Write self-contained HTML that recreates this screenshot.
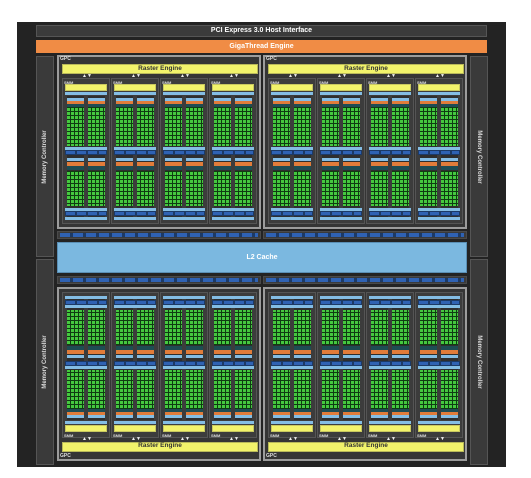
<!DOCTYPE html>
<html><head><meta charset="utf-8"><style>
*{margin:0;padding:0;box-sizing:border-box}
body{width:531px;height:478px;background:#fff;position:relative;overflow:hidden;font-family:"Liberation Sans",sans-serif}
.a{position:absolute}
#outer{left:17px;top:22px;width:489px;height:445px;background:#232323}
.bar{position:absolute;color:#fff;font-weight:bold;text-align:center}
.mc{position:absolute;width:18px;background:#3a3a3a;border:1px solid #555}
.mct{position:absolute;color:#ddd;font-size:6px;font-weight:bold;white-space:nowrap;width:100px;text-align:center;left:50%;top:50%;margin-left:-50px;margin-top:-4px;line-height:8px}
.gpc{position:absolute;width:204px;height:174px;background:#353535;border:2px solid #9c9c9c}
.ras{position:absolute;left:3px;top:7px;width:196px;height:10px;background:#f2f36b;border:1px solid #b9b95a}
.smm{position:absolute;top:21px;width:48px;height:146px;background:#3c3c3c;border:1px solid #555}
.s{position:absolute}
.yb{left:2px;top:5px;width:42px;height:7px;background:#f2f36b;border:1px solid #c8c860}
.lb{left:2px;width:42px;height:3px;background:#84bde4}
.db{left:2px;width:42px;height:5px;background:#1c3a66;background-image:repeating-linear-gradient(90deg,#2f62b3 0 9px,#1c3a66 9px 11px);border:1px solid #1c3a66}
.col{width:17px;top:17px;height:122px;background:#2e2e2e}
.c{position:absolute;left:0;width:17px}
.clb{background:#84bde4}
.cor{background:#e17c3a}
.cte{background:#1e4c54}
.cg{background-color:#0f3c12;background-image:linear-gradient(90deg,rgba(0,0,0,0) 0 3px,#0f3c12 3px 4px),linear-gradient(0deg,rgba(0,0,0,0) 0 3px,#0f3c12 3px 4px),linear-gradient(#45c83f,#45c83f);background-size:4px 4px,4px 4px,100% 100%}
.flip{transform:scaleY(-1)}
.lbl{position:absolute;color:#ddd;font-size:5px;font-weight:bold;line-height:5px}
.rt{position:absolute;width:196px;text-align:center;font-size:6.5px;font-weight:bold;color:#333;line-height:10px}
.arr{position:absolute;color:#eee;font-size:5px;line-height:5px;letter-spacing:0px}
.dash{position:absolute;height:8px;background:#3a3a3a;border:1px solid #4a4a4a}
.dash i{position:absolute;top:1px;bottom:1px;left:2px;right:2px;background-image:repeating-linear-gradient(90deg,#2f62b3 0 10px,#1c3a66 10px 13px)}
</style></head><body>
<div id="outer" class="a"></div>
<div class="bar" style="left:36px;top:25px;width:451px;height:12px;background:#3b3b3b;border:1px solid #555;font-size:7px;line-height:10px">PCI Express 3.0 Host Interface</div>
<div class="bar" style="left:36px;top:40px;width:451px;height:13px;background:#f08c45;font-size:7px;line-height:13px">GigaThread Engine</div>
<div class="mc" style="left:36px;top:56px;height:201px"><div class="mct" style="transform:rotate(-90deg)">Memory Controller</div></div>
<div class="mc" style="left:36px;top:259px;height:206px"><div class="mct" style="transform:rotate(-90deg)">Memory Controller</div></div>
<div class="mc" style="left:470px;top:56px;height:201px"><div class="mct" style="transform:rotate(90deg)">Memory Controller</div></div>
<div class="mc" style="left:470px;top:259px;height:206px"><div class="mct" style="transform:rotate(90deg)">Memory Controller</div></div>

<div class="dash" style="left:57px;top:231px;width:204px"><i></i></div>
<div class="dash" style="left:263px;top:231px;width:204px"><i></i></div>
<div class="a" style="left:57px;top:242px;width:410px;height:31px;background:#7bb8e0;border:1px solid #5a8fb5;color:#fff;font-size:7px;font-weight:bold;text-align:center;line-height:29px">L2 Cache</div>
<div class="dash" style="left:57px;top:276px;width:204px"><i></i></div>
<div class="dash" style="left:263px;top:276px;width:204px"><i></i></div>

<template id="t"></template>
<!-- GPC shapes -->
<div id="g1" class="gpc" style="left:57px;top:55px"></div>
<div id="g2" class="gpc" style="left:263px;top:55px"></div>
<div id="g3" class="gpc flip" style="left:57px;top:287px"></div>
<div id="g4" class="gpc flip" style="left:263px;top:287px"></div>

<!-- text labels -->
<div class="lbl" style="left:60px;top:57px">GPC</div>
<div class="lbl" style="left:266px;top:57px">GPC</div>
<div class="lbl" style="left:60px;top:454px">GPC</div>
<div class="lbl" style="left:266px;top:454px">GPC</div>
<div class="rt" style="left:62px;top:64px">Raster Engine</div>
<div class="rt" style="left:268px;top:64px">Raster Engine</div>
<div class="rt" style="left:62px;top:441px">Raster Engine</div>
<div class="rt" style="left:268px;top:441px">Raster Engine</div>

<div id="labels"></div>
<script>
function smmHTML(){
 var h='<div class="s yb"></div><div class="s lb" style="top:13px"></div>';
 [4,25].forEach(function(x){
  h+='<div class="s col" style="left:'+x+'px">'+
   '<div class="c clb" style="top:2px;height:3px"></div>'+
   '<div class="c cor" style="top:5px;height:3px"></div>'+
   '<div class="c cte" style="top:8px;height:3px"></div>'+
   '<div class="c cg" style="top:11px;height:39px"></div>'+
   '<div class="c clb" style="top:62px;height:3px"></div>'+
   '<div class="c cor" style="top:66px;height:4px"></div>'+
   '<div class="c cte" style="top:70px;height:4px"></div>'+
   '<div class="c cg" style="top:75px;height:35px"></div>'+
   '</div>';
 });
 h+='<div class="s lb" style="top:68px"></div><div class="s db" style="top:71px"></div>';
 h+='<div class="s lb" style="top:129px"></div><div class="s db" style="top:132px"></div><div class="s lb" style="top:138px"></div>';
 return h;
}
['g1','g2','g3','g4'].forEach(function(id){
 var g=document.getElementById(id),h='<div class="ras"></div>';
 [3,52,101,150].forEach(function(x){h+='<div class="smm" style="left:'+x+'px">'+smmHTML()+'</div>';});
 g.innerHTML=h;
});
</script>
<div class="lbl" style="left:64px;top:80px;font-size:4px">SMM</div>
<div class="lbl" style="left:113px;top:80px;font-size:4px">SMM</div>
<div class="lbl" style="left:162px;top:80px;font-size:4px">SMM</div>
<div class="lbl" style="left:211px;top:80px;font-size:4px">SMM</div>
<div class="lbl" style="left:270px;top:80px;font-size:4px">SMM</div>
<div class="lbl" style="left:319px;top:80px;font-size:4px">SMM</div>
<div class="lbl" style="left:368px;top:80px;font-size:4px">SMM</div>
<div class="lbl" style="left:417px;top:80px;font-size:4px">SMM</div>
<div class="lbl" style="left:64px;top:433px;font-size:4px">SMM</div>
<div class="lbl" style="left:113px;top:433px;font-size:4px">SMM</div>
<div class="lbl" style="left:162px;top:433px;font-size:4px">SMM</div>
<div class="lbl" style="left:211px;top:433px;font-size:4px">SMM</div>
<div class="lbl" style="left:270px;top:433px;font-size:4px">SMM</div>
<div class="lbl" style="left:319px;top:433px;font-size:4px">SMM</div>
<div class="lbl" style="left:368px;top:433px;font-size:4px">SMM</div>
<div class="lbl" style="left:417px;top:433px;font-size:4px">SMM</div>
<div class="arr" style="left:82px;top:74px">▲▼</div>
<div class="arr" style="left:131px;top:74px">▲▼</div>
<div class="arr" style="left:180px;top:74px">▲▼</div>
<div class="arr" style="left:229px;top:74px">▲▼</div>
<div class="arr" style="left:288px;top:74px">▲▼</div>
<div class="arr" style="left:337px;top:74px">▲▼</div>
<div class="arr" style="left:386px;top:74px">▲▼</div>
<div class="arr" style="left:435px;top:74px">▲▼</div>
<div class="arr" style="left:82px;top:437px">▲▼</div>
<div class="arr" style="left:131px;top:437px">▲▼</div>
<div class="arr" style="left:180px;top:437px">▲▼</div>
<div class="arr" style="left:229px;top:437px">▲▼</div>
<div class="arr" style="left:288px;top:437px">▲▼</div>
<div class="arr" style="left:337px;top:437px">▲▼</div>
<div class="arr" style="left:386px;top:437px">▲▼</div>
<div class="arr" style="left:435px;top:437px">▲▼</div>
</body></html>
